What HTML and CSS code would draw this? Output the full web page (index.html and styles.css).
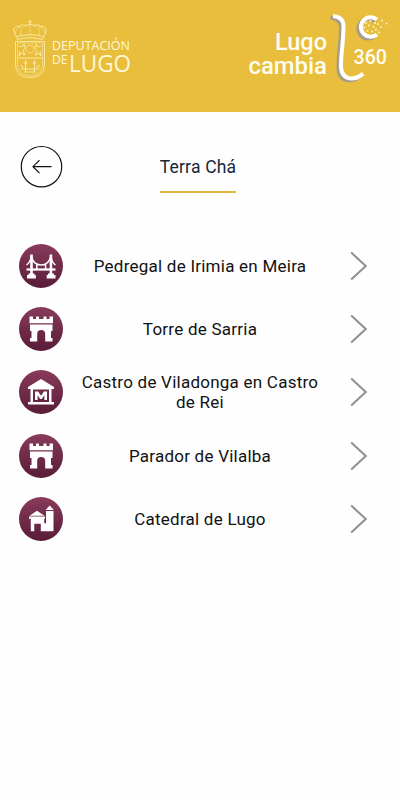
FILE: index.html
```html
<!DOCTYPE html>
<html lang="gl">
<head>
<meta charset="utf-8">
<meta name="viewport" content="width=device-width, initial-scale=1">
<title>Terra Chá</title>
<link rel="stylesheet" href="styles.css">
</head>
<body>
<svg class="defs" aria-hidden="true">
  <defs>
    <linearGradient id="plum" x1="0" y1="0" x2="0" y2="1">
      <stop offset="0" stop-color="#883b5b"/>
      <stop offset="1" stop-color="#591c38"/>
    </linearGradient>
    <symbol id="tower" viewBox="0 0 44 44">
      <circle cx="22" cy="22" r="22" fill="url(#plum)"/>
      <path fill="#fff" d="M10.500 9.500h3.500v2.500h3V9.500h3V12h4.500V9.500h3V12h3V9.500H34v6.700H10.500zM11 17.500h22.500V24H32v7h1.500v3.500h-7.300V27a4 4 0 0 0-8 0v7.500H11V31h1.500v-7H11z"/>
    </symbol>
    <symbol id="chevron" viewBox="0 0 18 30">
      <path d="M1.200 1.600 15.800 15 1.200 28.400" fill="none" stroke="#8f8f8f" stroke-width="2"/>
    </symbol>
  </defs>
</svg>
<header class="header">
  <svg class="deputacion" viewBox="0 0 130 64" role="img" aria-label="Deputación de Lugo">
    <g fill="none" stroke="#fff3b8" stroke-width=".8">
      <path d="M5.500 19.500 1.500 10.500Q2.500 6 7 6.500 11 3.500 14 5.500L18 4l4 1.500Q25 3.500 29 6.500 33.500 6 34.500 10.500L30.500 19.500Q18 16 5.500 19.500Z"/>
      <path d="M18 0v4M16.500 1.500h3M5 16.500q13-3.500 26 0"/>
      <path d="M3 13q1-5 6-6M33 13q-1-5-6-6M9 15q-2-6 5-9M27 15q2-6-5-9M18 5v10" stroke-dasharray="1.600 1"/>
      <path d="M3.500 21.500h29V44q0 13.500-14.500 13.500T3.500 44Z"/>
      <path d="M5.500 23h25v21q0 11.500-12.500 11.500T5.500 44Z" stroke-width=".5"/>
      <path d="M5 38h26"/>
      <circle cx="18" cy="29" r="4" stroke-width=".5"/>
      <path d="M7 26l3 1 2-3 1 4-2 3 2 4-4-2-2 3 1-5M29 26l-3 1-2-3-1 4 2 3-2 4 4-2 2 3-1-5"/>
      <path d="M13.500 40v12M22.500 40v12M11.500 43h4M20.500 43h4M8 45l3 2-2 3M28 45l-3 2 2 3M11 49h14M12 52h12"/>
    </g>
    <g fill="#fff8d6" class="deputacion-text">
      <text x="40" y="30" font-size="12.500" textLength="78" lengthAdjust="spacingAndGlyphs">DEPUTACIÓN</text>
      <text x="40" y="43.500" font-size="12.500" textLength="15.500" lengthAdjust="spacingAndGlyphs">DE</text>
      <text x="57" y="52" font-size="23.500" textLength="62" lengthAdjust="spacingAndGlyphs">LUGO</text>
    </g>
  </svg>
  <svg class="cambia" viewBox="0 0 144 74" role="img" aria-label="Lugo cambia 360">
    <g fill="none" stroke-width="4">
      <g stroke="#a59c8b" transform="translate(-2.500 1.800)">
        <path d="M88 6Q98.500 7 98.500 16C98.500 34 96 40 96 56Q96 67.500 106 68.500 113 68.700 118 63.500"/>
        <path d="M132 9.500A9.800 9.800 0 1 0 132 24.500"/>
      </g>
      <g stroke="#fff">
        <path d="M88 6Q98.500 7 98.500 16C98.500 34 96 40 96 56Q96 67.500 106 68.500 113 68.700 118 63.500"/>
        <path d="M132 9.500A9.800 9.800 0 1 0 132 24.500"/>
      </g>
    </g>
    <g fill="#fff8d6">
      <circle cx="121" cy="13" r=".9"/><circle cx="125.500" cy="11" r=".9"/><circle cx="130" cy="13" r=".9"/>
      <circle cx="119.500" cy="17.500" r=".9"/><circle cx="124" cy="15.500" r=".9"/><circle cx="128.500" cy="17" r=".9"/><circle cx="133" cy="14" r=".9"/><circle cx="137" cy="10.500" r=".9"/><circle cx="141.500" cy="13.500" r=".9"/>
      <circle cx="122.500" cy="21" r=".9"/><circle cx="127" cy="21.500" r=".9"/><circle cx="131" cy="19.500" r=".9"/><circle cx="136" cy="17" r=".9"/><circle cx="134" cy="22.500" r=".9"/>
    </g>
    <g fill="#fffdf0" class="cambia-text">
      <text x="30" y="40" font-size="23.500" textLength="52" lengthAdjust="spacingAndGlyphs">Lugo</text>
      <text x="3.500" y="63.500" font-size="23.500" textLength="78.500" lengthAdjust="spacingAndGlyphs">cambia</text>
      <text x="108.500" y="54" font-size="19.500" textLength="33.500" lengthAdjust="spacingAndGlyphs">360</text>
    </g>
  </svg>
</header>
<main>
  <div class="titlebar">
    <a class="back" href="#" aria-label="Volver">
      <svg viewBox="0 0 42 42" fill="none" stroke="#111" stroke-width="1.200">
        <circle cx="21.500" cy="20.700" r="20.200"/>
        <path d="M31.500 20.700H13.500M19.500 14.200 13 20.700l6.500 6.500"/>
      </svg>
    </a>
    <h1 class="title">Terra Chá</h1>
  </div>
  <ul class="places">
    <li class="place">
      <svg class="badge" viewBox="0 0 44 44">
        <circle cx="22" cy="22" r="22" fill="url(#plum)"/>
        <g fill="none" stroke="#fff">
          <path stroke-width="2.600" d="M12.500 10.500V31M31.900 10.500V31"/>
          <path stroke-width="1.500" d="M7.500 21Q11.500 18 12.300 12 14 21 22 21T32 12Q32.500 18 36.500 21M17.800 19.500V26M26.600 19.500V26"/>
          <path stroke-width="2.200" d="M7.500 25.500h29"/>
        </g>
        <path fill="#fff" d="M9.500 29.500h6V31h1.300v3.500H8V31h1.500zM29 29.500h6V31h1.500v3.500h-8.800V31H29z"/>
      </svg>
      <span class="name">Pedregal de Irimia en Meira</span>
      <svg class="chevron"><use href="#chevron"/></svg>
    </li>
    <li class="place">
      <svg class="badge"><use href="#tower"/></svg>
      <span class="name">Torre de Sarria</span>
      <svg class="chevron"><use href="#chevron"/></svg>
    </li>
    <li class="place">
      <svg class="badge" viewBox="0 0 44 44">
        <circle cx="22" cy="22" r="22" fill="url(#plum)"/>
        <path fill="#fff" fill-rule="evenodd" d="M22 9 35 17v2h-2.500v13H35v2.500H9V32h2.500V19H9v-2zM14 19.500V32h16V19.500z"/>
        <path fill="#fff" d="M16 21.500h3.200l2.800 4.300 2.800-4.300H28V30h-2.600v-4.700L22.800 29h-1.600l-2.600-3.700V30H16z"/>
      </svg>
      <span class="name">Castro de Viladonga en Castro de Rei</span>
      <svg class="chevron"><use href="#chevron"/></svg>
    </li>
    <li class="place">
      <svg class="badge"><use href="#tower"/></svg>
      <span class="name">Parador de Vilalba</span>
      <svg class="chevron"><use href="#chevron"/></svg>
    </li>
    <li class="place">
      <svg class="badge" viewBox="0 0 44 44">
        <circle cx="22" cy="22" r="22" fill="url(#plum)"/>
        <path fill="#fff" d="M18 13.800 25.500 18.700h-15zM10 19.500h16v2.300h-.8v4.400H27V14h7.500v20.200H21.800v-7.500h-6.500v7.500h-3.500V21.800H10zM30.700 8.500 34.800 12.900h-8.200z"/>
      </svg>
      <span class="name">Catedral de Lugo</span>
      <svg class="chevron"><use href="#chevron"/></svg>
    </li>
  </ul>
</main>
</body>
</html>
```
FILE: styles.css
```css
* { box-sizing: border-box; }
body {
  margin: 0;
  min-height: 800px;
  background: #fefefe;
  color: #111;
  font-family: Roboto, "Liberation Sans", sans-serif;
}
.defs { display: block; width: 0; height: 0; }
.header {
  display: flex;
  justify-content: space-between;
  align-items: flex-start;
  height: 112px;
  padding: 10px 11px 0 12px;
  background: #e8be3c;
}
.header svg { overflow: visible; }
.deputacion { width: 130px; height: 64px; margin-top: 10px; }
.deputacion-text { font-family: "Open Sans", sans-serif; }
.cambia { width: 144px; height: 74px; }
.cambia-text { font-family: Roboto, sans-serif; font-weight: 500; }
.titlebar {
  display: grid;
  grid-template-columns: 42px 1fr 46px;
  justify-items: center;
  padding: 34px 20px 0;
}
.back { display: block; width: 42px; height: 42px; }
.back svg { display: block; overflow: visible; }
.title {
  height: 37px;
  margin: 10px 0 0;
  border-bottom: 2px solid #e3b93d;
  color: #14283a;
  font-size: 17.500px;
  font-weight: 400;
  line-height: 22px;
  letter-spacing: .2px;
  align-self: start;
}
.places {
  margin: 41px 0 0;
  padding: 0 32px 0 19px;
  list-style: none;
}
.place {
  display: grid;
  grid-template-columns: 44px 1fr 18px;
  align-items: center;
  height: 63.400px;
}
.badge { display: block; width: 44px; height: 44px; }
.name {
  padding: 0 22px 0 9px;
  font-size: 17px;
  line-height: 20px;
  letter-spacing: .24px;
  text-align: center;
}
.chevron { display: block; width: 18px; height: 30px; }
```
